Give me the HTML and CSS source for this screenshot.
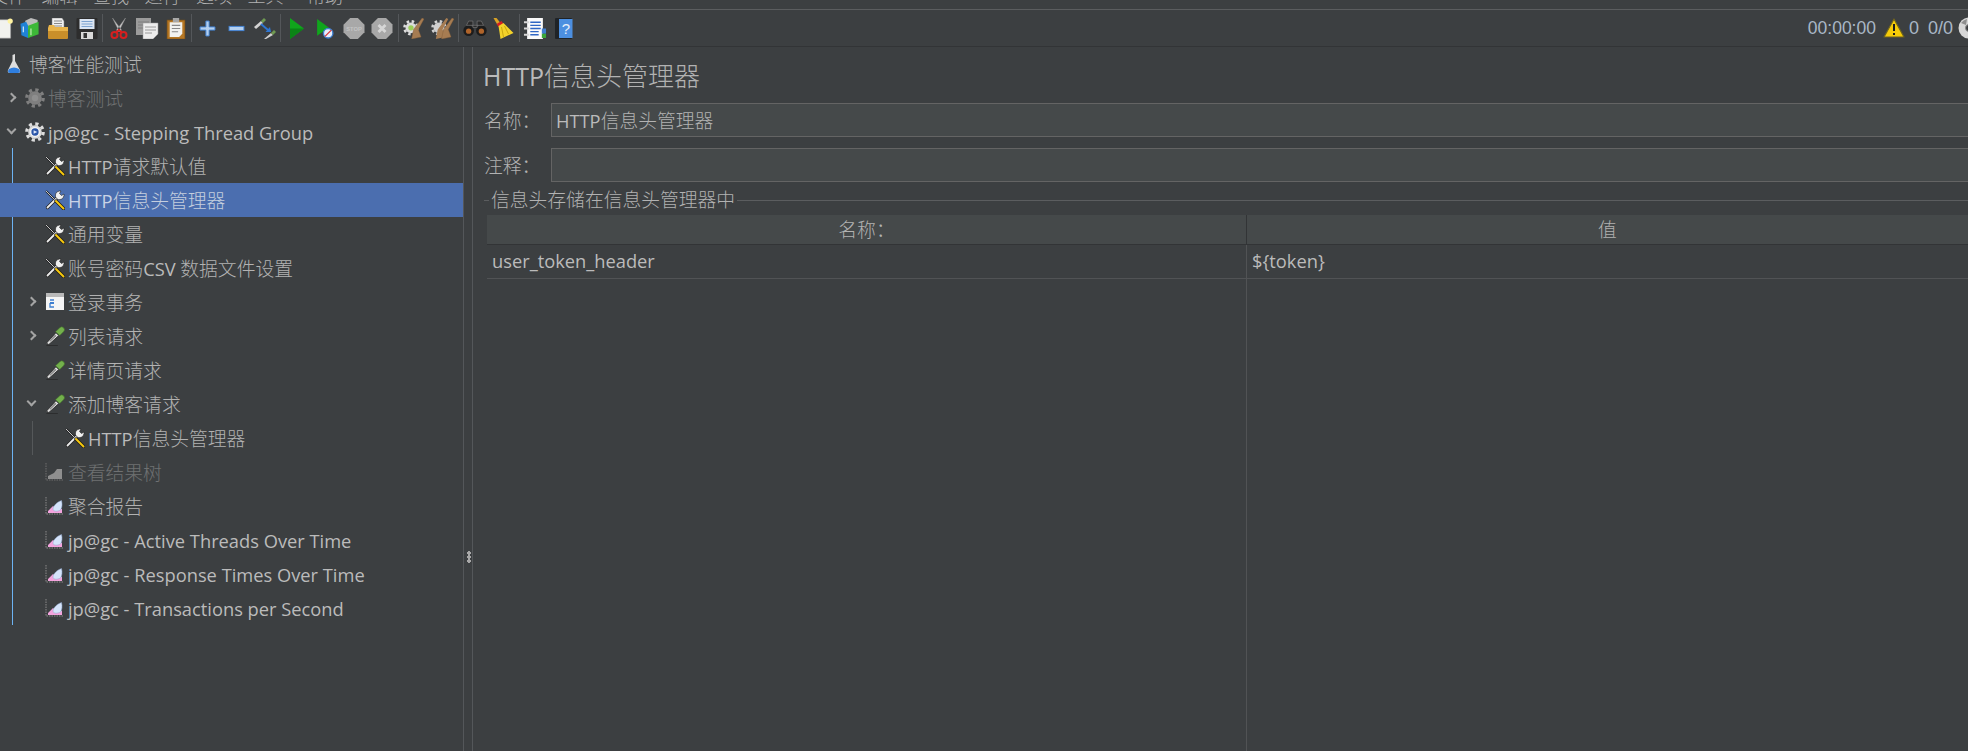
FILE: index.html
```html
<!DOCTYPE html>
<html lang="zh">
<head>
<meta charset="utf-8">
<title>Apache JMeter</title>
<link rel="stylesheet" href="styles.css">
</head>
<body>
<svg class="defs" width="0" height="0" aria-hidden="true">
  <defs>
    <g id="wrench">
      <path d="M1 1 L10 10" stroke="#222" stroke-width="2" fill="none"/>
      <path d="M1 1 L10 10" stroke="#dcdcdc" stroke-width=".9" fill="none"/>
      <path d="M2.500 17.500 L12 8" stroke="#222" stroke-width="3.200" stroke-linecap="round" fill="none"/>
      <path d="M2.500 17.500 L12 8" stroke="#ececec" stroke-width="1.800" stroke-linecap="round" fill="none"/>
      <path d="M11.500 8.500 A4.500 4.500 0 0 1 14.500 1 L16 1 L14.500 3.500 L16.500 5.500 L19 4 L19 5.500 A4.500 4.500 0 0 1 11.500 8.500 Z" fill="#f0f0f0" stroke="#222" stroke-width=".6"/>
      <path d="M11 11 L18.500 18.500" stroke="#1c1c1c" stroke-width="3.400" stroke-linecap="round" fill="none"/>
      <path d="M11 11 L18.500 18.500" stroke="#f7c90e" stroke-width="2" stroke-linecap="round" fill="none"/>
    </g>
    <g id="dropper">
      <path d="M1 18 L11 7 L14 10 L3.500 19.500 Z" fill="#dcdcdc" stroke="#2c2c2c" stroke-width=".9"/>
      <path d="M4 15.500 L10 9 L11.500 10.500 L5 16.500 Z" fill="#8c8c8c"/>
      <path d="M10.500 6 L15 1.800 A2.800 2.800 0 0 1 19 6 L15 10 Z" fill="#73b04c" stroke="#3e6c28" stroke-width=".6"/>
      <path d="M1 20.500 H13" stroke="#2b2c2d" stroke-width="1"/>
    </g>
    <g id="graph">
      <path d="M1 1 V18 H18" fill="none" stroke="#8a8a8a" stroke-dasharray="1.500 1"/>
      <path d="M3 17 V15 L8 10 L11 13 L17 13 V17 Z" fill="#f4a4de"/>
      <path d="M8 13 C8 10 12 6 16.500 4.500 C17.500 8 17 12 15.500 14 C13 15.500 8 16 8 13 Z" fill="#d5e4fb" stroke="#8fa6cc" stroke-width=".5"/>
    </g>
    <g id="graphoff">
      <path d="M1 1 V18 H18" fill="none" stroke="#6f6f6f" stroke-dasharray="1.500 1"/>
      <path d="M3 17 V14 L9 11 L12 7 H17 V17 Z" fill="#8f8f8f"/>
    </g>
    <g id="gear">
      <circle cx="11" cy="11" r="7.500" stroke="none"/>
      <circle cx="11" cy="11" r="9" fill="none" stroke-width="3.600" stroke-dasharray="3.500 3.570"/>
    </g>
  </defs>
</svg>

<div class="app">
  <nav class="menubar">
    <span class="menu m1">文件</span><span class="menu">编辑</span><span class="menu">查找</span><span class="menu">运行</span><span class="menu">选项</span><span class="menu">工具</span><span class="menu m7">帮助</span>
  </nav>

  <header class="toolbar">
    <span class="tool"><svg viewBox="0 0 24 24"><path d="M1 2 H20 L23 5 V23 H1 Z" fill="#f2f2ee" stroke="#9a9a9a" stroke-width=".6"/><circle cx="22.500" cy="3.500" r="3" fill="#fff3a0"/></svg></span>
    <span class="tool"><svg viewBox="0 0 20 22"><path d="M5 3 L11 0 L18 2 V12 L5 12 Z" fill="#bcbcbc"/><path d="M0 6 L6 4 L8 8 V21 L1 18 Z" fill="#1f82d6"/><path d="M8 8 L19 4 V17 L8 21 Z" fill="#3db838"/><path d="M3 9 V15" stroke="#cfe6f7" stroke-width="1.300"/><path d="M11 11 V18" stroke="#bff0b0" stroke-width="1.300"/></svg></span>
    <span class="tool"><svg viewBox="0 0 22 21"><path d="M5 0 H15 L17 3 V11 H5 Z" fill="#f0f0f0" stroke="#7f7f7f" stroke-width=".5"/><path d="M7 3 H15 M7 5.500 H15 M7 8 H15" stroke="#8a8a8a"/><path d="M1 10 L2 7 H7 L8 9 H21 V20 H1 Z" fill="#e9b44a"/><path d="M1 13 H21 V20 Q21 21 20 21 H2 Q1 21 1 20 Z" fill="#c98f2a"/></svg></span>
    <span class="tool"><svg viewBox="0 0 21 21"><path d="M0 1 Q0 0 1 0 H20 Q21 0 21 1 V20 Q21 21 20 21 H1 Q0 21 0 20 Z" fill="#2d2d2d"/><rect x="3" y="1" width="15" height="10" fill="#dbe5f2"/><path d="M5 3.500 H16 M5 6 H16 M5 8.500 H16" stroke="#7da3d0"/><rect x="4.500" y="14" width="12" height="7" fill="#d9d9d9"/><rect x="7" y="15" width="3.500" height="5" fill="#333"/></svg></span>
    <span class="sep"></span>
    <span class="tool"><svg viewBox="0 0 17 21"><path d="M2 0 L11 12 L9 14 Z M15 0 L6 12 L8 14 Z" fill="#cdcdcd" stroke="#8a8a8a" stroke-width=".5"/><circle cx="4" cy="17" r="3" fill="none" stroke="#d71f1f" stroke-width="2"/><circle cx="13" cy="17" r="3" fill="none" stroke="#d71f1f" stroke-width="2"/><path d="M5.500 14.500 L8.500 12 L11.500 14.500" stroke="#d71f1f" stroke-width="2" fill="none"/></svg></span>
    <span class="tool"><svg viewBox="0 0 22 21"><rect x="0" y="0" width="15" height="17" fill="#9b9b9b"/><path d="M2 4 H13 M2 7 H13 M2 10 H13" stroke="#7d7d7d"/><path d="M7 5 H22 V16 L17 21 H7 Z" fill="#ededed" stroke="#9a9a9a" stroke-width=".5"/><path d="M9 9 H20 M9 12 H20 M9 15 H16" stroke="#9a9a9a"/></svg></span>
    <span class="tool"><svg viewBox="0 0 18 20"><rect x="0.500" y="2" width="17" height="18" fill="#b57724" stroke="#7f5216" stroke-width=".6"/><path d="M3 4 H15 V15 L12 18 H3 Z" fill="#f2f2ef"/><path d="M5 7 H13 M5 10 H13 M5 13 H11" stroke="#888"/><rect x="6" y="0" width="6" height="4" fill="#a8a8a8"/></svg></span>
    <span class="sep"></span>
    <span class="tool"><svg class="small" viewBox="0 0 16 16"><path d="M6.500 1 H9.500 V6.500 H15 V9.500 H9.500 V15 H6.500 V9.500 H1 V6.500 H6.500 Z" fill="#b4d0f0" stroke="#4284d6" stroke-width=".9"/></svg></span>
    <span class="tool"><svg class="small" viewBox="0 0 16 16"><rect x="1" y="6" width="14" height="4" fill="#b4d0f0" stroke="#4284d6" stroke-width=".9"/></svg></span>
    <span class="tool"><svg viewBox="0 0 24 21"><path d="M1 9 L8 3 L10 5 L3 11 Z" fill="#d2d2d2"/><path d="M8 3 L11 0 L13 2 L10 5 Z" fill="#6f9a52"/><path d="M8 6 L15 12" stroke="#2f76d2" stroke-width="2"/><path d="M18 14 L12.500 14 L17 9 Z" fill="#2f76d2"/><path d="M11 21 L18 15 L20 17 L13 21 Z" fill="#cfcfcf"/><path d="M18 15 L21 12 L23 14 L20 17 Z" fill="#6f9a52"/></svg></span>
    <span class="sep"></span>
    <span class="tool"><svg viewBox="0 0 12 18"><path d="M0 0 L12 9 L0 18 Z" fill="#10a51c"/><path d="M0 9 L12 9 L0 18 Z" fill="#0b8416"/></svg></span>
    <span class="tool"><svg viewBox="0 0 15 20"><path d="M0 1 L11 9 L0 17 Z" fill="#10a51c"/><circle cx="10.500" cy="14.500" r="4.500" fill="#e8eefb" stroke="#3f7fd0" stroke-width="1.300"/><path d="M7.500 17.500 L13.500 11.500" stroke="#d93434" stroke-width="1.200"/></svg></span>
    <span class="tool"><svg viewBox="0 0 22 22"><path d="M7 0 H15 L22 7 V15 L15 22 H7 L0 15 V7 Z" fill="#a8a8a8"/><text x="11" y="13.500" class="stop">STOP</text></svg></span>
    <span class="tool"><svg viewBox="0 0 18 18"><path d="M5.500 0 H12.500 L18 5.500 V12.500 L12.500 18 H5.500 L0 12.500 V5.500 Z" fill="#a8a8a8"/><path d="M6 6 L12 12 M12 6 L6 12" stroke="#d6d6d6" stroke-width="2.400"/></svg></span>
    <span class="sep"></span>
    <span class="tool"><svg viewBox="0 0 21 22"><use href="#gear" transform="translate(-1 2) scale(.75)" fill="#dcdcdc" stroke="#dcdcdc"/><circle cx="7.300" cy="10.300" r="2.800" fill="#9ccf5a"/><path d="M19 0 L21 1 L15 12 L18 20 L8 22 L10 12 Z" fill="#a67c52" stroke="#7f5a35" stroke-width=".4"/></svg></span>
    <span class="tool"><svg viewBox="0 0 23 22"><use href="#gear" transform="translate(-1 2) scale(.75)" fill="#cfcfcf" stroke="#cfcfcf"/><path d="M15 0 L17 1 L11 12 L14 20 L4 22 L6 12 Z" fill="#a67c52"/><path d="M21 0 L23 1 L17 12 L20 20 L10 22 L12 12 Z" fill="#a67c52" stroke="#7f5a35" stroke-width=".4"/></svg></span>
    <span class="sep"></span>
    <span class="tool"><svg class="wide" viewBox="0 0 22 16"><circle cx="5" cy="10" r="5" fill="#1c1c1c"/><circle cx="17" cy="10" r="5" fill="#1c1c1c"/><path d="M3 5 L5 1 H9 V7 H13 V1 H17 L19 5 Z" fill="#2a2a2a" stroke="#8a8a8a" stroke-width=".5"/><circle cx="5" cy="10.500" r="2.500" fill="#b0642a"/><circle cx="17" cy="10.500" r="2.500" fill="#b0642a"/></svg></span>
    <span class="tool"><svg viewBox="0 0 21 21"><path d="M1 0 L4 0 L8 5 L5 7 Z" fill="#d9a326"/><path d="M4 6 L9 3 L11 6 L6 9 Z" fill="#d32020"/><path d="M6 8 L11 5 L21 15 L8 21 Q7 14 6 8 Z" fill="#f3d22a"/><path d="M9 9 L11 19 M12 8 L16 16" stroke="#c9a70f"/></svg></span>
    <span class="sep"></span>
    <span class="tool"><svg viewBox="0 0 21 20"><rect x="3" y="0" width="15" height="20" fill="#fafafa"/><path d="M6 4 H16 M6 7 H16 M6 10 H16 M6 13 H14 M6 16 H14" stroke="#2f66c4" stroke-width="1.300"/><path d="M0 4 H5 M0 10 H5 M0 16 H5" stroke="#d8d8d8" stroke-width="2"/><rect x="17" y="10" width="4" height="5" fill="#3f7fd0"/><rect x="17" y="15" width="4" height="4" fill="#3aa63a"/></svg></span>
    <span class="tool"><svg viewBox="0 0 18 21"><rect x="0" y="0" width="17" height="21" rx="1" fill="#1f2327"/><rect x="4" y="1" width="13.500" height="19" fill="#4c8fe0"/><text x="11" y="16" class="qm">?</text></svg></span>
    <span class="status">
      <span class="timer">00:00:00</span>
      <svg class="warn" viewBox="0 0 22 20"><path d="M11 1 L21 19 H1 Z" fill="#f6cb08" stroke="#6e6320" stroke-width="1.200" stroke-linejoin="round"/><path d="M11 6 V13 M11 15 V17" stroke="#1d1d1d" stroke-width="2"/></svg>
      <span class="count">0</span>
      <span class="ratio">0/0</span>
      <svg class="globe" viewBox="0 0 22 22"><circle cx="11" cy="11" r="10.500" fill="#d7d7d7"/><path d="M3 6 A10 10 0 0 1 9 2 L8 8 Z M19 16 A10 10 0 0 1 13 20 L14 14 Z" fill="#8e8e8e"/><circle cx="11" cy="11" r="3.500" fill="#3c3f41" stroke="#8e8e8e"/></svg>
    </span>
  </header>

  <main class="workspace">
    <aside class="tree">
      <span class="guide guide-main"></span>
      <span class="guide guide-sub"></span>
      <div class="row l0"><svg class="ico ico-flask" viewBox="0 0 14 20"><path d="M5.500 1 L8 0 V7 L13 16 Q14 19 11 19 H3 Q0 19 1 16 L5.500 7 Z" fill="#dedede"/><path d="M2 15 Q7 12 12 15 L13 17 Q13 19 11 19 H3 Q1 19 1 17 Z" fill="#2f7fe0"/></svg><span class="cn">博客性能测试</span></div>
      <div class="row l0 off"><span class="arrow right"></span><svg class="ico ico-gear" viewBox="0 0 22 22"><use href="#gear" fill="#7f7f7f" stroke="#7f7f7f"/><circle cx="11" cy="11" r="3.500" fill="#8e8e8e"/></svg><span class="cn">博客测试</span></div>
      <div class="row l0"><span class="arrow down"></span><svg class="ico ico-gear" viewBox="0 0 22 22"><use href="#gear" fill="#dcdcdc" stroke="#dcdcdc"/><circle cx="11" cy="11" r="5.500" fill="#f4f4f4"/><circle cx="11" cy="11" r="4" fill="#2a55a8"/><path d="M9.500 9 L13.500 11 L9.500 13 Z" fill="#dfe8fa"/></svg><span>jp@gc - Stepping Thread Group</span></div>
      <div class="row l1"><svg class="ico ico-tool" viewBox="0 0 20 20"><use href="#wrench"/></svg><span>HTTP<span class="cn">请求默认值</span></span></div>
      <div class="row l1 selected"><svg class="ico ico-tool" viewBox="0 0 20 20"><use href="#wrench"/></svg><span>HTTP<span class="cn">信息头管理器</span></span></div>
      <div class="row l1"><svg class="ico ico-tool" viewBox="0 0 20 20"><use href="#wrench"/></svg><span class="cn">通用变量</span></div>
      <div class="row l1"><svg class="ico ico-tool" viewBox="0 0 20 20"><use href="#wrench"/></svg><span><span class="cn">账号密码</span>CSV <span class="cn">数据文件设置</span></span></div>
      <div class="row l1"><span class="arrow right"></span><svg class="ico ico-tool" viewBox="0 0 20 18"><rect x="1" y="0" width="18" height="17" fill="#f5f5f5"/><rect x="1" y="0" width="18" height="4" fill="#b9b9b9"/><path d="M5 7 H9 M5 10 V14 H9" stroke="#3f7fd0" stroke-width="1.300" fill="none"/><rect x="5" y="9" width="4" height="2" fill="#3f7fd0"/></svg><span class="cn">登录事务</span></div>
      <div class="row l1"><span class="arrow right"></span><svg class="ico ico-tool" viewBox="0 0 20 21"><use href="#dropper"/></svg><span class="cn">列表请求</span></div>
      <div class="row l1"><svg class="ico ico-tool" viewBox="0 0 20 21"><use href="#dropper"/></svg><span class="cn">详情页请求</span></div>
      <div class="row l1"><span class="arrow down"></span><svg class="ico ico-tool" viewBox="0 0 20 21"><use href="#dropper"/></svg><span class="cn">添加博客请求</span></div>
      <div class="row l2"><svg class="ico ico-tool" viewBox="0 0 20 20"><use href="#wrench"/></svg><span>HTTP<span class="cn">信息头管理器</span></span></div>
      <div class="row l1 off"><svg class="ico ico-tool" viewBox="0 0 20 20"><use href="#graphoff"/></svg><span class="cn">查看结果树</span></div>
      <div class="row l1"><svg class="ico ico-tool" viewBox="0 0 20 20"><use href="#graph"/></svg><span class="cn">聚合报告</span></div>
      <div class="row l1"><svg class="ico ico-tool" viewBox="0 0 20 20"><use href="#graph"/></svg><span>jp@gc - Active Threads Over Time</span></div>
      <div class="row l1"><svg class="ico ico-tool" viewBox="0 0 20 20"><use href="#graph"/></svg><span>jp@gc - Response Times Over Time</span></div>
      <div class="row l1"><svg class="ico ico-tool" viewBox="0 0 20 20"><use href="#graph"/></svg><span>jp@gc - Transactions per Second</span></div>
    </aside>

    <div class="splitter"><span class="dots"></span></div>

    <section class="panel">
      <h1 class="title">HTTP<span class="cn-title">信息头管理器</span></h1>
      <div class="field">
        <label class="field-label cn">名称：</label>
        <div class="field-input">HTTP<span class="cn">信息头管理器</span></div>
      </div>
      <div class="field">
        <label class="field-label cn">注释：</label>
        <div class="field-input"></div>
      </div>
      <fieldset class="group">
        <legend class="group-title cn">信息头存储在信息头管理器中</legend>
        <div class="table">
          <div class="thead">
            <div class="th c1 cn">名称：</div>
            <div class="th c2 cn">值</div>
          </div>
          <div class="tr">
            <div class="td c1">user_token_header</div>
            <div class="td c2">${token}</div>
          </div>
          <div class="tfill">
            <div class="c1"></div>
            <div class="c2"></div>
          </div>
        </div>
      </fieldset>
    </section>
  </main>
</div>
</body>
</html>
```
FILE: styles.css
```css
* { box-sizing: border-box; }
html, body { margin: 0; height: 100%; overflow: hidden; }
body {
  background: #3c3f41;
  color: #bbbbbb;
  font-family: "Open Sans", "Noto Sans CJK SC", sans-serif;
  font-size: 18.300px;
}
.defs { position: absolute; }
.app { display: flex; flex-direction: column; width: 1968px; height: 751px; overflow: hidden; }
.cn { font-size: 18.800px; font-weight: 300; color: #b2b2b2; }
.off .cn { color: #6f7172; }
.selected .cn { color: #c4cede; }

.menubar {
  display: flex;
  height: 10px;
  flex: none;
  overflow: hidden;
  border-bottom: 1px solid #5b5d5f;
  font-size: 18px;
  font-weight: 300;
  color: #b2b2b2;
}
.menu { margin-top: -19px; width: 51.500px; flex: none; padding-left: 7px; height: 30px; line-height: 30px; }
.m1 { margin-left: -17px; }
.m7 { margin-left: 8px; }

.toolbar {
  display: flex;
  align-items: center;
  height: 37px;
  flex: none;
  border-bottom: 1px solid #323436;
  margin-left: -13px;
}
.tool { width: 28.500px; height: 36px; flex: none; display: flex; align-items: center; justify-content: center; }
.tool svg { height: 21px; width: 24px; display: block; }
.tool svg.small { height: 17px; width: 17px; }
.tool svg.wide { height: 17px; width: 24px; }
.sep { width: 1px; height: 28px; margin: 0 1.250px; background: #54575a; flex: none; }
.stop { font: bold 6px "Liberation Sans", sans-serif; fill: #c4c4c4; text-anchor: middle; }
.qm { font: 15px "Liberation Sans", sans-serif; fill: #e6eefa; text-anchor: middle; }

.status { margin-left: auto; display: flex; align-items: center; height: 36px; color: #a9b7c6; font-size: 18px; }
.timer { font-family: "Liberation Sans", sans-serif; font-size: 17.500px; }
.warn { width: 22px; height: 20px; margin-left: 7px; }
.count { margin-left: 4px; font-family: "Liberation Sans", sans-serif; }
.ratio { margin-left: 9px; font-family: "Liberation Sans", sans-serif; }
.globe { width: 22px; height: 22px; margin-left: 5px; margin-right: -12px; flex: none; }

.workspace { display: flex; flex: 1; min-height: 0; }

.tree { position: relative; width: 463px; flex: none; }
.guide { position: absolute; width: 1px; }
.guide-main { left: 12px; top: 101px; height: 477px; background: #6db3f2; }
.guide-sub { left: 32px; top: 374px; height: 34px; background: #55585a; }
.row { display: flex; align-items: center; height: 34px; white-space: nowrap; position: relative; }
.row.selected { background: #4b6eaf; color: #c9d3e6; }
.row.off { color: #6f7172; }
.l0 { padding-left: 7px; }
.l1 { padding-left: 45px; }
.l2 { padding-left: 65px; }
.ico { display: block; flex: none; }
.ico-flask { width: 14px; height: 20px; margin-right: 8px; }
.ico-gear { width: 20px; height: 20px; margin-right: 3px; margin-left: 18px; }
.ico-tool { width: 20px; height: 20px; margin-right: 3px; }
.arrow { position: absolute; width: 7px; height: 7px; border-right: 2px solid #a4a4a4; border-bottom: 2px solid #a4a4a4; }
.arrow.right { transform: rotate(-45deg); top: 13px; }
.arrow.down { transform: rotate(45deg); top: 11px; }
.l0 .arrow { left: 8px; }
.l1 .arrow { left: 28px; }

.splitter { width: 10px; flex: none; border-left: 1px solid #54575a; border-right: 1px solid #54575a; position: relative; }
.dots { position: absolute; left: 3px; top: 504px; width: 4px; height: 12px; background: radial-gradient(circle, #a8a8a8 1.800px, transparent 2px) 0 0 / 4px 4px; }

.panel { flex: 1; min-width: 0; padding: 0 0 0 11px; display: flex; flex-direction: column; }
.title { margin: 11px 0 0 -1px; font-size: 25px; font-weight: 400; line-height: 36px; height: 36px; color: #bbbbbb; }
.cn-title { font-size: 26px; font-weight: 300; color: #b2b2b2; }
.field { display: flex; align-items: center; margin-top: 11px; height: 34px; }
.field:first-of-type { margin-top: 9px; }
.field-label { width: 67px; flex: none; }
.field-input { flex: 1; height: 34px; line-height: 33px; background: #45494a; border: 1px solid #646464; border-right: 0; padding-left: 4px; }

.group { flex: 1; min-height: 0; margin: 7px 0 0; padding: 0 0 0 3px; border: 0; border-top: 1px solid #5b5d5f; display: flex; flex-direction: column; }
.group-title { padding: 0 2px; margin-left: 2px; line-height: 22px; }
.table { flex: 1; display: flex; flex-direction: column; margin-top: 4px; min-height: 0; }
.thead { display: flex; height: 30px; background: #45494a; border-bottom: 1px solid #323436; flex: none; }
.th { text-align: center; line-height: 31px; }
.c1 { width: 760px; flex: none; border-right: 1px solid #323436; }
.c2 { flex: 1; }
.tr { display: flex; height: 34px; border-bottom: 1px solid #515355; flex: none; }
.td { padding-left: 5px; line-height: 32px; }
.td.c1 { border-right-color: #515355; }
.tfill { display: flex; flex: 1; }
.tfill .c1 { border-right-color: #515355; }
```
